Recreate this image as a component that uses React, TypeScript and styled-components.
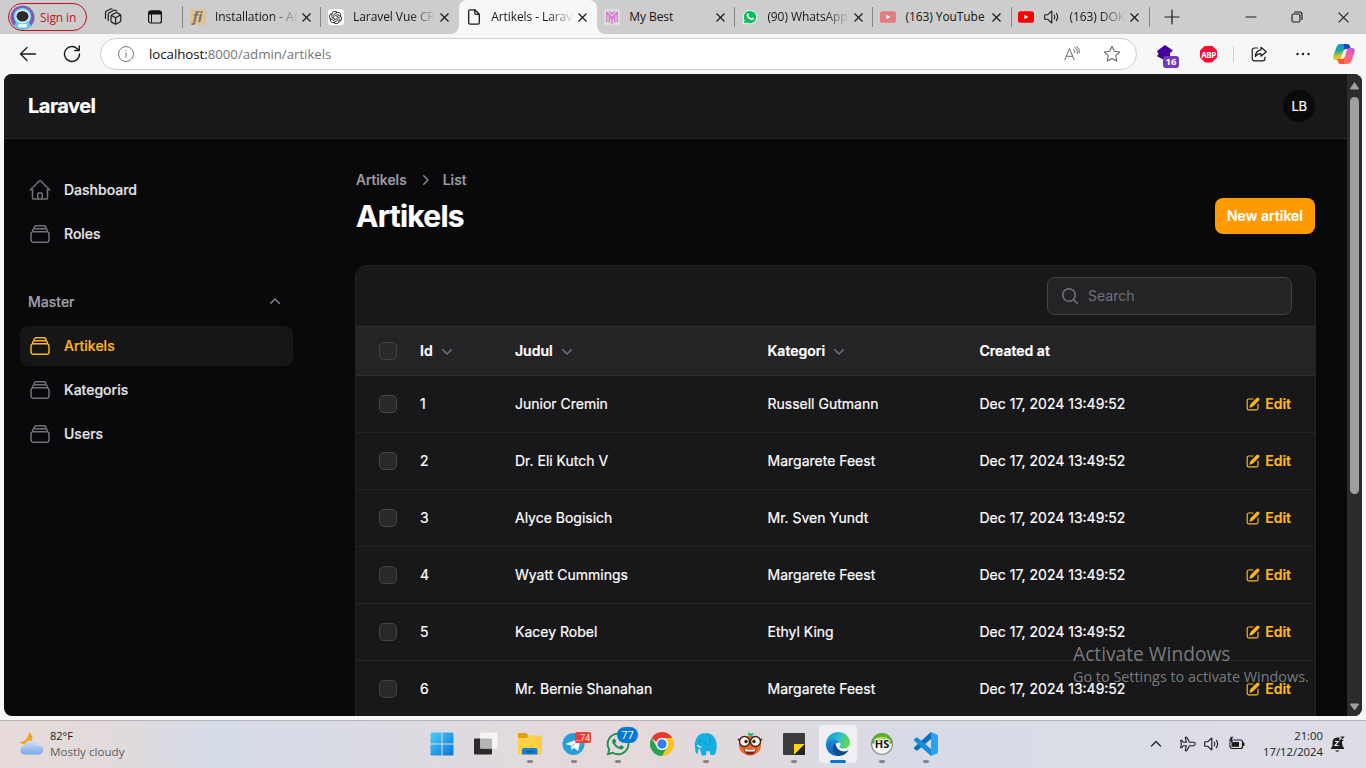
import React from "react";
import styled, { createGlobalStyle, css } from "styled-components";
import { SiOpenai } from "react-icons/si";
import { FaWhatsapp } from "react-icons/fa";

const GlobalStyle = createGlobalStyle`
  *, *::before, *::after { box-sizing: border-box; }
  body { margin: 0; overflow: hidden; background: #f7f7f7; }
  svg { display: block; flex: none; }
`;

const uiFont = `"Open Sans", "Noto Sans", sans-serif`;
const appFont = `Inter, "Liberation Sans", sans-serif`;

const Desktop = styled.div`
  position: relative;
  width: 1366px;
  height: 768px;
  display: flex;
  flex-direction: column;
  overflow: hidden;
  background: #f7f7f7;
  font-family: ${uiFont};
  color: #1b1b1b;
`;

/* ---------- Browser tab strip ---------- */

const TabStrip = styled.div`
  height: 34px;
  flex: none;
  display: flex;
  align-items: center;
  background: #cdcdcd;
`;

const SignIn = styled.div`
  margin-left: 8px;
  width: 79px;
  height: 28px;
  display: flex;
  align-items: center;
  gap: 5px;
  padding-left: 1px;
  border: 1px solid #c50f1f;
  border-radius: 14px;
  color: #c01020;
  font-size: 12px;
  letter-spacing: -0.1px;
  white-space: nowrap;
`;

const StripIcon = styled.div<{ $w: number }>`
  width: ${(p) => p.$w}px;
  display: flex;
  justify-content: center;
  flex: none;
`;

const Tabs = styled.div`
  display: flex;
  height: 34px;
  border-left: 1px solid #858585;
  border-image: linear-gradient(#cdcdcd 7px, #858585 7px, #858585 27px, #cdcdcd 27px) 1;
`;

const Tab = styled.div<{ $active?: boolean; $line?: boolean }>`
  position: relative;
  width: 138.1px;
  height: 34px;
  display: flex;
  align-items: center;
  padding: 0 10.5px 0 6.5px;
  border-radius: 8px 8px 0 0;
  ${(p) =>
    p.$active &&
    css`
      background: #f7f7f7;
      &::before,
      &::after {
        content: "";
        position: absolute;
        bottom: 0;
        width: 8px;
        height: 8px;
      }
      &::before {
        left: -8px;
        background: radial-gradient(circle at 0 0, #cdcdcd 7.5px, #f7f7f7 8px);
      }
      &::after {
        right: -8px;
        background: radial-gradient(circle at 100% 0, #cdcdcd 7.5px, #f7f7f7 8px);
      }
    `}
  ${(p) =>
    p.$line &&
    css`
      &::after {
        content: "";
        position: absolute;
        right: 0;
        top: 7px;
        width: 1px;
        height: 20px;
        background: #858585;
      }
    `}
`;

const TabTitle = styled.div<{ $fade?: boolean; $ls?: number }>`
  flex: 1;
  min-width: 0;
  margin: 0 4px 0 9.5px;
  overflow: hidden;
  white-space: nowrap;
  font-size: 12px;
  letter-spacing: -0.08px;
  line-height: 18px;
  color: #161616;
  ${(p) =>
    p.$fade &&
    css`
      mask-image: linear-gradient(90deg, #000 calc(100% - 26px), transparent);
    `}
`;

const FiIcon = styled.div`
  width: 16px;
  height: 16px;
  flex: none;
  background: #e3c196;
  border-radius: 2px;
  color: #7d746b;
  font: italic 700 14px/15px "Open Sans", sans-serif;
  text-align: center;
`;

const WhiteTile = styled.div`
  width: 16px;
  height: 16px;
  display: grid;
  place-items: center;
  flex: none;
  background: #fff;
  border-radius: 3px;
  color: #222;
`;

const WindowButtons = styled.div`
  margin-left: auto;
  display: flex;
  align-items: center;
`;

/* ---------- Browser toolbar ---------- */

const Toolbar = styled.div`
  height: 40px;
  flex: none;
  display: flex;
  align-items: center;
`;

const NavIcons = styled.div`
  width: 100px;
  display: flex;
  align-items: center;
  gap: 26px;
  padding-left: 19px;
`;

const AddressBar = styled.div`
  width: 1037px;
  height: 32px;
  display: flex;
  align-items: center;
  padding: 0 15px 0 17px;
  border: 1px solid #cfcfcf;
  border-radius: 16px;
  background: #fff;
`;

const Url = styled.div`
  flex: 1;
  margin-left: 15px;
  font-size: 13.3px;
  line-height: 18px;
  letter-spacing: -0.05px;
  color: #767676;
  b {
    font-weight: 400;
    color: #111;
  }
`;

const AddressIcons = styled.div`
  display: flex;
  align-items: center;
  gap: 23px;
`;

const ToolbarIcons = styled.div`
  flex: 1;
  display: flex;
  align-items: center;
`;

const Extension = styled.div`
  position: relative;
  margin-left: 19px;
  width: 20px;
  height: 18px;
`;

const ExtensionBadge = styled.span`
  position: absolute;
  left: 7px;
  top: 11px;
  width: 16px;
  height: 12px;
  border-radius: 3px;
  background: #7338bd;
  color: #fff;
  font-size: 9.5px;
  font-weight: 700;
  line-height: 12px;
  text-align: center;
`;

const AdBlock = styled.div`
  width: 17px;
  height: 17px;
  margin-left: 24px;
  margin-right: 1px;
  background: #fb0a35;
  clip-path: polygon(30% 0, 70% 0, 100% 30%, 100% 70%, 70% 100%, 30% 100%, 0 70%, 0 30%);
  color: #fff;
  font: 700 8px/17px "Open Sans", sans-serif;
  letter-spacing: -0.4px;
  text-align: center;
`;

const Divider = styled.div`
  width: 1px;
  height: 16px;
  margin-left: 15px;
  background: #cfcfcf;
`;

/* ---------- Web page ---------- */

const Viewport = styled.div`
  margin: 0 4px 4px;
  height: 642px;
  flex: none;
  display: flex;
  overflow: hidden;
  border-radius: 8px;
  background: #09090b;
  font-family: ${appFont};
  font-size: 14px;
  line-height: 20px;
  -webkit-text-stroke: 0.2px;
`;

const Page = styled.div`
  flex: 1;
  min-width: 0;
  display: flex;
  flex-direction: column;
`;

const Topbar = styled.header`
  height: 65px;
  flex: none;
  display: flex;
  align-items: center;
  justify-content: space-between;
  padding: 0 32px 1px 24px;
  background: #18181b;
  border-bottom: 1px solid #232326;
`;

const Brand = styled.div`
  font-size: 20px;
  font-weight: 700;
  line-height: 20px;
  letter-spacing: -0.5px;
  color: #fff;
`;

const Avatar = styled.div`
  width: 32px;
  height: 32px;
  border-radius: 50%;
  background: #09090b;
  color: #fff;
  font-size: 13px;
  line-height: 32px;
  letter-spacing: -0.5px;
  text-align: center;
`;

const Columns = styled.div`
  flex: 1;
  min-height: 0;
  display: flex;
`;

const Sidebar = styled.nav`
  width: 320px;
  flex: none;
  display: flex;
  flex-direction: column;
  gap: 28px;
  padding: 31px 31px 0 16px;
`;

const NavGroup = styled.div`
  display: flex;
  flex-direction: column;
  gap: 4px;
`;

const GroupLabel = styled.div`
  height: 40px;
  display: flex;
  align-items: center;
  justify-content: space-between;
  padding: 0 8px;
  font-weight: 500;
  color: #a1a1aa;
  svg {
    color: #84848c;
  }
`;

const NavItem = styled.a<{ $active?: boolean }>`
  height: 40px;
  display: flex;
  align-items: center;
  gap: 12px;
  padding: 0 8px;
  border-radius: 8px;
  font-weight: 500;
  color: ${(p) => (p.$active ? "#fbb51e" : "#e4e4e7")};
  background: ${(p) => (p.$active ? "#161617" : "transparent")};
  svg {
    color: ${(p) => (p.$active ? "#fbb51e" : "#71717a")};
  }
`;

const Main = styled.main`
  width: 960px;
  display: flex;
  flex-direction: column;
  padding-top: 31px;
  margin-left: 31px;
`;

const Crumbs = styled.div`
  display: flex;
  align-items: center;
  gap: 8px;
  padding-left: 1px;
  font-weight: 500;
  color: #a1a1aa;
  svg {
    color: #84848c;
  }
`;

const HeadingRow = styled.div`
  height: 36px;
  margin-top: 8px;
  display: flex;
  align-items: center;
  justify-content: space-between;
  padding-left: 1px;
`;

const Heading = styled.h1`
  margin: 0;
  font-size: 30px;
  font-weight: 700;
  line-height: 36px;
  letter-spacing: -0.75px;
  color: #fff;
`;

const PrimaryButton = styled.button`
  width: 100px;
  height: 36px;
  padding: 0;
  border: 0;
  border-radius: 8px;
  background: #ff9a00;
  color: #fff;
  font: 600 14px/20px ${appFont};
`;

const TableCard = styled.section`
  width: 961px;
  height: 480px;
  flex: none;
  margin-top: 31px;
  border: 1px solid #222225;
  border-radius: 12px 12px 0 0;
  background: #18181b;
  overflow: hidden;
`;

const TableTools = styled.div`
  height: 60px;
  display: flex;
  justify-content: flex-end;
  padding: 11px 23px 0 0;
`;

const SearchField = styled.div`
  width: 245px;
  height: 38px;
  display: flex;
  align-items: center;
  gap: 8px;
  padding-left: 12px;
  border: 1px solid #454548;
  border-radius: 8px;
  background: #242427;
  color: #71717a;
  -webkit-text-stroke: 0;
`;

const Row = styled.div<{ $head?: boolean }>`
  height: ${(p) => (p.$head ? 50 : 57)}px;
  display: grid;
  grid-template-columns: 52px 95px 252.5px 212px 1fr;
  align-items: center;
  border-bottom: 1px solid ${(p) => (p.$head ? "#303032" : "#242427")};
  border-top: ${(p) => (p.$head ? "1px solid #303032" : "0")};
  background: ${(p) => (p.$head ? "#242427" : "transparent")};
  font-weight: ${(p) => (p.$head ? 600 : 400)};
  color: #fff;
`;

const Cell = styled.div<{ $end?: boolean }>`
  display: flex;
  align-items: center;
  justify-content: ${(p) => (p.$end ? "flex-end" : "flex-start")};
  gap: 4px;
  padding: 0 ${(p) => (p.$end ? 24 : 12)}px 0 12px;
  white-space: nowrap;
`;

const SortIcon = styled.span`
  color: #71717a;
`;

const LastCells = styled.div`
  display: flex;
  justify-content: space-between;
`;

const Checkbox = styled.span`
  width: 18px;
  height: 18px;
  margin-left: 23px;
  border: 1px solid #454548;
  border-radius: 5px;
  background: #29292b;
`;

const EditLink = styled.a`
  display: flex;
  align-items: center;
  gap: 4px;
  font-weight: 600;
  color: #fbb51e;
`;

const Scrollbar = styled.div`
  width: 15px;
  flex: none;
  display: flex;
  flex-direction: column;
  align-items: center;
  padding: 8px 0 5px;
  background: #2c2c2c;
`;

const Thumb = styled.div`
  width: 9px;
  height: 397px;
  margin-top: 7px;
  border-radius: 5px;
  background: #9f9f9f;
`;

const Spacer = styled.div`
  flex: 1;
`;

const Watermark = styled.div`
  position: absolute;
  left: 1073px;
  top: 641px;
  color: rgba(150, 150, 150, 0.8);
  white-space: nowrap;
`;

const WatermarkTitle = styled.div`
  font-size: 19.2px;
  line-height: 26px;
`;

const WatermarkText = styled.div`
  font-size: 14.4px;
  line-height: 20px;
`;

/* ---------- Taskbar ---------- */

const Taskbar = styled.footer`
  height: 48px;
  flex: none;
  display: flex;
  align-items: center;
  padding-bottom: 1px;
  border-top: 1px solid #b4b4b8;
  background: linear-gradient(90deg, #e6dbda 0, #e2dadb 110px, #d5dce9 220px, #dbdbe3 370px, #e5d9da 620px, #dfd9de 760px, #d8dbe6 900px, #dddde6 1366px);
`;

const Weather = styled.div`
  width: 420px;
  flex: none;
  display: flex;
  align-items: center;
  gap: 6px;
  padding-left: 18px;
  padding-bottom: 1px;
  font-size: 11.65px;
  line-height: 16px;
  color: #5c5c5c;
  b {
    display: block;
    font-weight: 400;
    color: #1b1b1b;
    font-size: 11px;
  }
`;

const Slot = styled.div`
  width: 44px;
  height: 46px;
  display: flex;
  justify-content: center;
  align-items: center;
`;

const AppTile = styled.div<{ $active?: boolean; $running?: boolean }>`
  position: relative;
  width: 38px;
  height: 38px;
  display: grid;
  place-items: center;
  border-radius: 4px;
  background: ${(p) => (p.$active ? "#f0eff3" : "transparent")};
  ${(p) =>
    (p.$running || p.$active) &&
    css`
      &::after {
        content: "";
        position: absolute;
        left: 50%;
        bottom: 0;
        width: ${p.$active ? 16 : 6}px;
        height: 3px;
        transform: translateX(-50%);
        border-radius: 2px;
        background: ${p.$active ? "#0078d4" : "#858388"};
      }
    `}
`;

const Badge = styled.span<{ $kind: "red" | "blue" }>`
  position: absolute;
  top: ${(p) => (p.$kind === "red" ? 7 : 2)}px;
  left: ${(p) => (p.$kind === "red" ? 20 : 18)}px;
  width: ${(p) => (p.$kind === "red" ? 16 : 21)}px;
  height: ${(p) => (p.$kind === "red" ? 11 : 16)}px;
  border-radius: ${(p) => (p.$kind === "red" ? 2 : 8)}px;
  background: ${(p) => (p.$kind === "red" ? "#f23c34" : "#0078d4")};
  color: #fff;
  font-size: ${(p) => (p.$kind === "red" ? 8.5 : 11)}px;
  line-height: ${(p) => (p.$kind === "red" ? 11 : 16)}px;
  text-align: center;
`;

const Tray = styled.div`
  margin-left: auto;
  display: flex;
  align-items: center;
  padding-right: 20px;
`;

const TrayIcons = styled.div`
  display: flex;
  align-items: center;
  gap: 8px;
  margin-left: 18px;
`;

const Clock = styled.div`
  width: 78px;
  margin-right: 7px;
  padding-bottom: 1px;
  text-align: right;
  font-size: 11.3px;
  line-height: 16px;
  color: #1b1b1b;
`;

/* ---------- Icons ---------- */

type LineProps = {
  size?: number;
  w?: number;
  box?: number;
  d: string;
  color?: string;
};

const Line = ({ size = 16, w = 1, box = 16, d, color = "currentColor" }: LineProps) => (
  <svg width={size} height={size} viewBox={`0 0 ${box} ${box}`} fill="none" stroke={color} strokeWidth={w} strokeLinecap="round" strokeLinejoin="round">
    <path d={d} />
  </svg>
);

const Solid = ({ size = 20, paths, rule }: { size?: number; paths: string[]; rule?: "evenodd" }) => (
  <svg width={size} height={size} viewBox="0 0 20 20" fill="currentColor">
    {paths.map((d) => (
      <path key={d} d={d} fillRule={rule} clipRule={rule} />
    ))}
  </svg>
);

const HOME =
  "m2.25 12 8.954-8.955c.44-.439 1.152-.439 1.591 0L21.75 12M4.5 9.75v10.125c0 .621.504 1.125 1.125 1.125H9.75v-4.875c0-.621.504-1.125 1.125-1.125h2.25c.621 0 1.125.504 1.125 1.125V21h4.125c.621 0 1.125-.504 1.125-1.125V9.75M8.25 21h8.25";
const STACK =
  "M6 6.878V6a2.25 2.25 0 0 1 2.25-2.25h7.5A2.25 2.25 0 0 1 18 6v.878m-12 0c.235-.083.487-.128.75-.128h10.5c.263 0 .515.045.75.128m-12 0A2.25 2.25 0 0 0 4.5 9v.878m13.5-3A2.25 2.25 0 0 1 19.5 9v.878m0 0a2.246 2.246 0 0 0-.75-.128H5.25c-.263 0-.515.045-.75.128m15 0A2.25 2.25 0 0 1 21 12v6a2.25 2.25 0 0 1-2.25 2.25H5.25A2.25 2.25 0 0 1 3 18v-6c0-.98.626-1.813 1.5-2.122";
const CHEVRON_DOWN =
  "M5.22 8.22a.75.75 0 0 1 1.06 0L10 11.94l3.72-3.72a.75.75 0 1 1 1.06 1.06l-4.25 4.25a.75.75 0 0 1-1.06 0L5.22 9.28a.75.75 0 0 1 0-1.06Z";
const CHEVRON_UP =
  "M9.47 6.47a.75.75 0 0 1 1.06 0l4.25 4.25a.75.75 0 1 1-1.06 1.06L10 8.06l-3.72 3.72a.75.75 0 0 1-1.06-1.06l4.25-4.25Z";
const CHEVRON_RIGHT =
  "M8.22 5.22a.75.75 0 0 1 1.06 0l4.25 4.25a.75.75 0 0 1 0 1.06l-4.25 4.25a.75.75 0 0 1-1.06-1.06L11.94 10 8.22 6.28a.75.75 0 0 1 0-1.06Z";
const MAGNIFIER = "M9 3.5a5.5 5.5 0 1 0 0 11 5.5 5.5 0 0 0 0-11ZM2 9a7 7 0 1 1 12.452 4.391l3.328 3.329a.75.75 0 1 1-1.06 1.06l-3.329-3.328A7 7 0 0 1 2 9Z";
const PENCIL = [
  "m5.433 13.917 1.262-3.155A4 4 0 0 1 7.58 9.42l6.92-6.918a2.121 2.121 0 0 1 3 3l-6.92 6.918c-.383.383-.84.685-1.343.886l-3.154 1.262a.5.5 0 0 1-.65-.65Z",
  "M3.5 5.75c0-.69.56-1.25 1.25-1.25H10A.75.75 0 0 0 10 3H4.75A2.75 2.75 0 0 0 2 5.75v9.5A2.75 2.75 0 0 0 4.75 18h9.5A2.75 2.75 0 0 0 17 15.25V10a.75.75 0 0 0-1.5 0v5.25c0 .69-.56 1.25-1.25 1.25h-9.5c-.69 0-1.25-.56-1.25-1.25v-9.5Z",
];

const AstronautIcon = () => (
  <svg width="25" height="25" viewBox="0 0 25 25">
    <circle cx="12.5" cy="12.5" r="12" fill="#8059b5" />
    <path d="M4 21c1-4 4-5 8.500-5s7.500 1 8.500 5a12 12 0 0 1-17 0z" fill="#5ccbe4" />
    <circle cx="12.500" cy="11.500" r="8.800" fill="#72d3ec" />
    <ellipse cx="12.500" cy="11.300" rx="7.300" ry="6.800" fill="#eaf4fa" />
    <ellipse cx="12.500" cy="11.300" rx="6" ry="5.200" fill="#2c2a2b" />
    <rect x="8" y="19" width="9" height="3.500" rx="1" fill="#e8f3f8" />
  </svg>
);

const WorkspacesIcon = () => (
  <Line
    size={18}
    box={18}
    w={1.2}
    color="#1b1b1b"
    d="M7 8.200q0-.800.700-1.200l4-2.200q.700-.400 1.400 0l3 1.600q.700.400.700 1.200v5q0 .800-.700 1.200l-3.700 2.100q-.700.400-1.400 0l-3.300-1.800q-.700-.400-.700-1.200zM7.300 7.500l4.300 2.300 4.900-2.800M11.600 9.800v6M4.200 12.500V6.300q0-.800.700-1.200L10 2.300q.700-.300 1.400 0l1.300.700M1.500 10.500V4.500q0-.800.700-1.200L6.500 1q.700-.300 1.500 0"
  />
);

const TabMenuIcon = () => (
  <svg width="16" height="16" viewBox="0 0 16 16">
    <rect x="1.600" y="2" width="12.800" height="12" rx="2" fill="none" stroke="#111" strokeWidth="1.200" />
    <path d="M1.500 3.500q0-2 2-2h9q2 0 2 2V5.500h-13z" fill="#111" />
    <path d="M4.500 5v8.500" stroke="#111" strokeWidth="1" />
  </svg>
);

const CloseIcon = ({ size = 8 }: { size?: number }) => (
  <svg width={size + 1} height={size + 1} viewBox="0 0 9 9" stroke="#1b1b1b" strokeWidth={size > 8 ? 0.9 : 1.2}>
    <path d="M.5.5l8 8M8.500.500l-8 8" />
  </svg>
);

const PageIcon = () => <Line w={1.3} color="#1b1b1b" d="M2.700 2.200Q2.700.800 4 .800h4.800l4.500 4.500v8.500q0 1.400-1.400 1.400H4q-1.300 0-1.300-1.400zM8.800.900v3.200q0 1.200 1.200 1.200h3.200" />;

const MyBestIcon = () => (
  <svg width="16" height="16" viewBox="0 0 16 16">
    <rect width="16" height="16" fill="#dcdcdc" />
    <path d="M2.800 13V3.500L8 8.500l5.200-5V13M5.300 13.500V7.500L8 10l2.700-2.500v6M8 10v5M5.300 2.500 8 5l2.700-2.500" fill="none" stroke="#d77bd5" strokeWidth="1.400" />
  </svg>
);

const WhatsTabIcon = () => (
  <svg width="16" height="16" viewBox="0 0 16 16">
    <path d="M1 15l1.200-3.500A6.700 6.700 0 1 1 4.800 14z" fill="#0cc058" stroke="#fff" strokeWidth=".9" />
    <path d="M5.600 4.400c.5-.3.900 0 1.100.6.300.8.200 1-.3 1.600.7 1.400 1.500 2.100 2.900 2.700.6-.7.800-1 1.300-.7 1.200.5 1.400.6 1.200 1.200-.5 1.300-1.900 1.500-3.300.9C6.400 9.900 5.200 8.500 4.800 7c-.3-1.200 0-2 .8-2.600z" fill="#fff" />
  </svg>
);

const YouTubeIcon = ({ color }: { color: string }) => (
  <svg width="16" height="16" viewBox="0 0 16 16">
    <rect x="0" y="2.300" width="16" height="11.500" rx="2.600" fill={color} />
    <path d="M6.400 5.800v4.500l4-2.200z" fill="#fff" />
  </svg>
);

const SpeakerIcon = ({ size = 16 }: { size?: number }) => (
  <Line size={size} w={1.1} color="#1b1b1b" d="M1.200 5.800h2.300L7.800 2v12L3.500 10.200H1.200Q.6 10.200.6 9.500v-3q0-.7.6-.7zM10.200 6q1.200 2 0 4M12.400 4.300q2.400 3.700 0 7.400" />
);

const CopilotIcon = () => (
  <svg width="24" height="24" viewBox="0 0 24 24">
    <defs>
      <linearGradient id="cpA" x1="0" y1="0" x2=".2" y2="1">
        <stop offset="0" stopColor="#1684e0" />
        <stop offset=".5" stopColor="#1fae9c" />
        <stop offset=".8" stopColor="#e5c424" />
      </linearGradient>
      <linearGradient id="cpB" x1="1" y1="0" x2=".2" y2="1">
        <stop offset="0" stopColor="#ad58ee" />
        <stop offset=".5" stopColor="#fa619b" />
        <stop offset="1" stopColor="#ff7c34" />
      </linearGradient>
    </defs>
    <path d="M15.500 2H8.200Q5.500 2 4.600 4.800L1.400 14q-1 3.600 2.300 4h3.100q1.700 0 2.300-2L13 4q.6-2 2.500-2z" fill="url(#cpA)" />
    <path d="M12 2h3.300q2 0 2.700 2.200L18.800 7h-5q-1.600 0-2.200 2z" fill="#164ac4" />
    <path d="M8.500 22h7.300q2.700 0 3.600-2.800L22.600 10q1-3.600-2.300-4h-3.100q-1.700 0-2.300 2L11 20q-.6 2-2.500 2z" fill="url(#cpB)" />
    <path d="M12 22H8.700q-2 0-2.700-2.200L5.200 17h5q1.600 0 2.200-2z" fill="#ff5630" />
  </svg>
);

const WeatherIcon = () => (
  <svg width="26" height="26" viewBox="0 0 26 26">
    <defs>
      <linearGradient id="cloud" x1="0" y1="0" x2="0" y2="1">
        <stop offset="0" stopColor="#cfe2fb" />
        <stop offset="1" stopColor="#7da6e9" />
      </linearGradient>
    </defs>
    <path d="M11 1c2.500 1.500 4 5 3.200 8.200C12.800 14 7 15.500 1 10.800 6 11.500 10.500 7.500 11 1z" fill="#f3a51f" />
    <path d="M5.500 23.500a4.500 4.500 0 0 1 .8-8.700A6.800 6.800 0 0 1 19.500 14.500a4.600 4.600 0 1 1 1 9z" fill="url(#cloud)" />
  </svg>
);

const WindowsIcon = () => (
  <svg width="24" height="24" viewBox="0 0 24 24">
    <defs>
      <linearGradient id="win" gradientUnits="userSpaceOnUse" x1="0" y1="0" x2="24" y2="24">
        <stop offset="0" stopColor="#4cd0fb" />
        <stop offset="1" stopColor="#0873d2" />
      </linearGradient>
    </defs>
    <path d="M.5 1.500q0-1 1-1H11.500v11H.5zM12.500.5h10q1 0 1 1v10h-11zM.5 12.500h11v11h-10q-1 0-1-1zM12.500 12.500h11v10q0 1-1 1h-10z" fill="url(#win)" />
  </svg>
);

const TaskViewIcon = () => (
  <svg width="24" height="24" viewBox="0 0 24 24">
    <rect x="0" y="6.500" width="18" height="16" rx="1" fill="#2c2b2b" />
    <rect x="6" y=".5" width="17.500" height="16" rx="1" fill="#f5f5f6" />
    <path d="M6 6.500h11q1 0 1 1v9H7q-1 0-1-1z" fill="#b4b4b4" />
  </svg>
);

const ExplorerIcon = () => (
  <svg width="26" height="24" viewBox="0 0 26 24">
    <path d="M1 2q0-1 1-1h7l2.500 2.500V8H1z" fill="#dda00c" />
    <path d="M1 6h8.500L12 3.500h12q1 0 1 1V21q0 1.500-1.500 1.500h-21Q1 22.500 1 21z" fill="#ffd045" />
    <path d="M5 22.500V18q0-2 2-2h11.500q2 0 2 2v4.500z" fill="#147dce" />
    <path d="M9 20.500q0-1.200 1-1.200h6q1 0 1 1.200z" fill="#0b569f" />
  </svg>
);

const TelegramIcon = () => (
  <svg width="24" height="24" viewBox="0 0 24 24">
    <circle cx="11.500" cy="12" r="11" fill="#279ed5" />
    <path d="M4 11.800 18 6.300q.9-.2.700.8l-2.300 11q-.2.900-1 .4l-3.600-2.700-1.900 1.900q-.5.300-.6-.4l-.5-3.700-4.600-1.300q-.8-.2-.2-.5z" fill="#fff" />
    <path d="m9 13.500 6.500-4-4.500 5-1.200 3z" fill="#b9d8ea" />
  </svg>
);

const ChromeIcon = () => (
  <svg width="24" height="24" viewBox="0 0 24 24">
    <path d="M1.600 6A12 12 0 0 1 22.400 6H12a6 6 0 0 0-5.600 4z" fill="#e33b2e" />
    <path d="M22.400 6A12 12 0 0 1 12 24l5.200-9A6 6 0 0 0 12 6z" fill="#fcc31e" />
    <path d="M1.600 6A12 12 0 0 0 12 24l5.200-9A6 6 0 0 1 6.800 15z" fill="#2ba24c" />
    <circle cx="12" cy="12" r="6" fill="#fff" />
    <circle cx="12" cy="12" r="4.700" fill="#3b7ded" />
  </svg>
);

const ElephantIcon = () => (
  <svg width="24" height="24" viewBox="0 0 24 24">
    <path d="M4.500 3.500C6.500 1.500 9 1 11 1.500c3-.8 6.500 0 8.500 3 2.500 2.500 3.500 6 3.200 9.500 0 3.500-.7 6-1.700 8.500q-2.500 1-4.800 0l-.7-3.500q-1.500.5-3 0l-.3 4q-2.500 1-4.700 0L5.800 16.500q-1.500-.3-1.600 2 .1 2-.7 3.500Q1 21 1.200 17c-.8-4-.7-9.500 3.300-13.500z" fill="#16afe2" />
    <path d="M13 2c4 2 5 7 2.500 10.500-2.800 1-5-.5-6-3.500" fill="none" stroke="#0b8fc4" strokeWidth=".8" />
    <circle cx="5.800" cy="9" r=".8" fill="#07588b" />
    <path d="M3.500 13q1 2.500 4 2" stroke="#fff" strokeWidth="1.200" fill="none" />
  </svg>
);

const OrangeFaceIcon = () => (
  <svg width="26" height="26" viewBox="0 0 26 26">
    <ellipse cx="13" cy="14.500" rx="11" ry="10" fill="#ed6826" />
    <path d="M11 4V1.500l3 1 3-.5-2 3.500z" fill="#24b36a" />
    <circle cx="7.500" cy="10.500" r="5" fill="#fff4de" stroke="#3c2522" strokeWidth="1.400" />
    <circle cx="18.500" cy="10.500" r="5" fill="#fff4de" stroke="#3c2522" strokeWidth="1.400" />
    <path d="M.7 8.500h2M23.300 8.500h2" stroke="#3c2522" strokeWidth="1.500" />
    <circle cx="9" cy="10.500" r="1.700" fill="#31201e" />
    <circle cx="17" cy="10.500" r="1.700" fill="#31201e" />
    <path d="M6.500 17.500q6.500 2 13 0-1 6-6.500 6t-6.500-6z" fill="#7c1c25" />
    <path d="M7.500 18q5.500 1.500 11 0l-1 2.500h-9z" fill="#fff" />
  </svg>
);

const NotesIcon = () => (
  <svg width="24" height="24" viewBox="0 0 24 24">
    <rect x="1" y="1" width="22" height="22" rx="1" fill="#3b3b3c" />
    <path d="M12 12h11L12 23z" fill="#fcd414" />
    <path d="M23 12v10q0 1-1 1H12z" fill="#252525" />
  </svg>
);

const EdgeIcon = () => (
  <svg width="26" height="26" viewBox="0 0 26 26">
    <defs>
      <linearGradient id="edA" x1="0" y1=".3" x2="1" y2=".5">
        <stop offset="0" stopColor="#1897d4" />
        <stop offset=".5" stopColor="#29bfc7" />
        <stop offset="1" stopColor="#67dc50" />
      </linearGradient>
      <linearGradient id="edB" x1="0" y1="0" x2="0" y2="1">
        <stop offset="0" stopColor="#1b8edb" />
        <stop offset="1" stopColor="#1262bb" />
      </linearGradient>
    </defs>
    <path d="M1 12C2 5 7 1 13 1c7 0 12 5 12 10.500 0 4-3 6-6.500 6-2.500 0-4.500-1-4-2 1.300-1.300 1.200-2.700.700-4C13.500 7.500 6 6.500 1 12z" fill="url(#edA)" />
    <path d="M1 12c3-5 12-5.500 14 0-5-1.500-7 3-5.500 6.500 1 2.500 3 5 5.500 6.300C7 26.500 0 20 1 12z" fill="url(#edB)" />
    <path d="M10.500 11.800c-3 2.200-3 6.700-.3 9.500 3.500 3.600 8.800 3 13.300-2-2.500 1.500-6.500 1.700-9.300-.3-2.500-1.800-3.700-4.500-3.700-7.200z" fill="#114b8b" />
    <path d="M23.500 19.300c-2 3.500-5.500 5.700-9.500 5.700-4-1-7-5-6.500-9 1.500 5 9 8.500 16 3.300z" fill="#114b8b" />
  </svg>
);

const HeidiIcon = () => (
  <svg width="24" height="24" viewBox="0 0 24 24">
    <circle cx="12" cy="12" r="10.500" fill="#f3f5f0" stroke="#8c918c" strokeWidth="1.200" />
    <path d="M1.800 11.500a10.200 10.200 0 0 1 20.400 0z" fill="#5cae22" />
    <path d="M4 8Q12 1.500 20 8q-8-3-16 0z" fill="#b9e391" />
    <text x="12" y="16" textAnchor="middle" fontFamily="Open Sans" fontWeight="700" fontSize="11" fill="#111" stroke="#fff" strokeWidth="2" paintOrder="stroke">HS</text>
  </svg>
);

const CodeIcon = () => (
  <svg width="26" height="26" viewBox="0 0 26 26">
    <path d="M18 1 24 3.500q1 .5 1 1.500v16q0 1-1 1.500L18 25z" fill="#2ba4f0" />
    <path d="M18 1v7L4.500 19.500q-.6.500-1.200 0L1.200 17.700q-.7-.7 0-1.400z" fill="#0b6fb9" />
    <path d="M18 25v-7L4.500 6.500q-.6-.5-1.200 0L1.200 8.300q-.7.700 0 1.400z" fill="#178bd7" />
  </svg>
);

const BatteryIcon = () => (
  <svg width="17" height="16" viewBox="0 0 17 16">
    <rect x="2" y="4" width="12.500" height="8.500" rx="2" fill="none" stroke="#1b1b1b" strokeWidth="1.200" />
    <rect x="3.500" y="6" width="7.500" height="4.800" fill="#1b1b1b" />
    <path d="M15.700 6.500V10" stroke="#1b1b1b" strokeWidth="1.500" />
    <path d="M2.800.500.700 5h2l-.6 4L6 4H4L5.500.500z" fill="#1b1b1b" stroke="#dddde6" strokeWidth=".5" />
  </svg>
);

const BellIcon = () => (
  <svg width="16" height="18" viewBox="0 0 16 18">
    <path d="M2.500 7q.3-4 4.500-4.500h5V8l.8 3.500L14 13v1H1v-1l1.500-2z" fill="#1b1b1b" />
    <path d="M5 15.500h4.500Q7.300 18 5 15.500z" fill="#1b1b1b" />
    <path d="M5 6.500h3.300L5 10.500h3.500" fill="none" stroke="#fff" strokeWidth="1.100" />
    <path d="M9.500 1h5v5h-5z" fill="#dddde6" />
    <path d="M10.500 2h3l-3 3.500h3" fill="none" stroke="#1b1b1b" strokeWidth="1.100" />
  </svg>
);

/* ---------- Data ---------- */

const tabs = [
  { title: "Installation - Admin", icon: <FiIcon>fi</FiIcon>, fade: true, line: true },
  { title: "Laravel Vue CRUD", icon: <WhiteTile><SiOpenai size={13} /></WhiteTile>, fade: true },
  { title: "Artikels - Laravel", icon: <PageIcon />, fade: true, active: true },
  { title: "My Best", icon: <MyBestIcon />, line: true },
  { title: "(90) WhatsApp", icon: <WhatsTabIcon />, fade: true, line: true },
  { title: "(163) YouTube", icon: <YouTubeIcon color="#e57c80" />, line: true },
  { title: "(163) DOKU", icon: <YouTubeIcon color="#ff0000" />, fade: true, line: true, audio: true },
];

const articles = [
  [1, "Junior Cremin", "Russell Gutmann"],
  [2, "Dr. Eli Kutch V", "Margarete Feest"],
  [3, "Alyce Bogisich", "Mr. Sven Yundt"],
  [4, "Wyatt Cummings", "Margarete Feest"],
  [5, "Kacey Robel", "Ethyl King"],
  [6, "Mr. Bernie Shanahan", "Margarete Feest"],
] as const;

const apps: { icon: React.ReactNode; running?: boolean; active?: boolean }[] = [
  { icon: <WindowsIcon /> },
  { icon: <TaskViewIcon /> },
  { icon: <ExplorerIcon />, running: true },
  { icon: <><TelegramIcon /><Badge $kind="red">..74</Badge></>, running: true },
  { icon: <><FaWhatsapp size={26} color="#1d8f57" /><Badge $kind="blue">77</Badge></>, running: true },
  { icon: <ChromeIcon /> },
  { icon: <ElephantIcon />, running: true },
  { icon: <OrangeFaceIcon /> },
  { icon: <NotesIcon />, running: true },
  { icon: <EdgeIcon />, active: true },
  { icon: <HeidiIcon />, running: true },
  { icon: <CodeIcon />, running: true },
];

const NavLink = ({ label, icon = STACK, active }: { label: string; icon?: string; active?: boolean }) => (
  <NavItem $active={active}>
    <Line size={24} box={24} w={1.5} d={icon} />
    {label}
  </NavItem>
);

const SortHead = ({ label }: { label: string }) => (
  <Cell>
    {label}
    <SortIcon>
      <Solid paths={[CHEVRON_DOWN]} />
    </SortIcon>
  </Cell>
);

const AudioMark = styled.span`
  margin-left: 10px;
`;

export default function App() {
  return (
    <Desktop>
      <GlobalStyle />
      <TabStrip>
        <SignIn>
          <AstronautIcon />
          Sign in
        </SignIn>
        <StripIcon $w={52}><WorkspacesIcon /></StripIcon>
        <StripIcon $w={32}><TabMenuIcon /></StripIcon>
        <StripIcon $w={11} />
        <Tabs>
          {tabs.map((t) => (
            <Tab key={t.title} $active={t.active} $line={t.line}>
              {t.icon}
              {t.audio && <AudioMark><SpeakerIcon /></AudioMark>}
              <TabTitle $fade={t.fade}>{t.title}</TabTitle>
              <CloseIcon />
            </Tab>
          ))}
        </Tabs>
        <StripIcon $w={44}><Line w={1.2} color="#1b1b1b" d="M8 1v14M1 8h14" /></StripIcon>
        <WindowButtons>
          <StripIcon $w={46}><Line size={12} box={12} w={1.1} color="#1b1b1b" d="M1 6h10" /></StripIcon>
          <StripIcon $w={46}>
            <Line size={12} box={12} w={1.1} color="#1b1b1b" d="M1 4.500q0-1.500 1.500-1.500h5Q9 3 9 4.500v5Q9 11 7.500 11h-5Q1 11 1 9.500zM3.500 1h5Q11 1 11 3.500v5" />
          </StripIcon>
          <StripIcon $w={46}><CloseIcon size={10} /></StripIcon>
        </WindowButtons>
      </TabStrip>

      <Toolbar>
        <NavIcons>
          <Line size={18} box={18} w={1.3} color="#1b1b1b" d="M1.500 9h15M8 2.500 1.500 9 8 15.500" />
          <Line size={18} box={18} w={1.4} color="#1b1b1b" d="M16.500 9a7.500 7.500 0 1 1-2.500-5.600L16.300 5.500M16.300 1v4.500h-4.500" />
        </NavIcons>
        <AddressBar>
          <Line size={16} w={1} color="#767676" d="M8 .5a7.500 7.500 0 1 1 0 15 7.500 7.500 0 0 1 0-15zM8 7v4.500M8 4.500v.200" />
          <Url><b>localhost:</b>8000/admin/artikels</Url>
          <AddressIcons>
            <Line w={1} color="#6b6b6b" d="M.8 14 5.500 2.500 10.200 14M2.500 10.300h6M9.500 3.300q1.500 1.300 1.300 3.200M11 1.300q3 2.200 2.500 6M12.800.500q3 2.200 2.700 6" />
            <Line size={18} box={18} w={1.1} color="#6b6b6b" d="m9 1.300 2.300 5 5.400.7-4 3.700 1.100 5.400L9 13.400l-4.800 2.700 1.100-5.400-4-3.700 5.400-.7z" />
          </AddressIcons>
        </AddressBar>
        <ToolbarIcons>
          <Extension>
            <svg width="18" height="16" viewBox="0 0 18 16">
              <path d="M9 0 17 5.500 14 8v4.500L8 15 1 11l1.800-1.500L1 6z" fill="#4b00a2" />
              <path d="m1 11 2.500-2.500L9 11v4z" fill="#32107a" />
            </svg>
            <ExtensionBadge>16</ExtensionBadge>
          </Extension>
          <AdBlock>ABP</AdBlock>
          <Divider />
          <StripIcon $w={49}>
            <Line size={16} w={1.2} color="#1b1b1b" d="M6.500 2H3.500Q1.200 2 1.200 4.300v8Q1.200 14.800 3.500 14.800h8Q14 14.800 14 12.500V11M10 1.300 15.200 5.800 10 10.200V7.700Q6.500 7.500 4.300 10.500 4.800 4.300 10 3.800z" />
          </StripIcon>
          <StripIcon $w={39}>
            <svg width="14" height="4" viewBox="0 0 14 4" fill="#1b1b1b">
              <circle cx="1.500" cy="2" r="1.200" />
              <circle cx="7" cy="2" r="1.200" />
              <circle cx="12.500" cy="2" r="1.200" />
            </svg>
          </StripIcon>
          <StripIcon $w={44}><CopilotIcon /></StripIcon>
        </ToolbarIcons>
      </Toolbar>

      <Viewport>
        <Page>
          <Topbar>
            <Brand>Laravel</Brand>
            <Avatar>LB</Avatar>
          </Topbar>
          <Columns>
            <Sidebar>
              <NavGroup>
                <NavLink label="Dashboard" icon={HOME} />
                <NavLink label="Roles" />
              </NavGroup>
              <NavGroup>
                <GroupLabel>
                  Master
                  <Solid paths={[CHEVRON_UP]} />
                </GroupLabel>
                <NavLink label="Artikels" active />
                <NavLink label="Kategoris" />
                <NavLink label="Users" />
              </NavGroup>
            </Sidebar>
            <Main>
              <Crumbs>
                Artikels
                <Solid paths={[CHEVRON_RIGHT]} />
                List
              </Crumbs>
              <HeadingRow>
                <Heading>Artikels</Heading>
                <PrimaryButton>New artikel</PrimaryButton>
              </HeadingRow>
              <TableCard>
                <TableTools>
                  <SearchField>
                    <Solid paths={[MAGNIFIER]} rule="evenodd" />
                    Search
                  </SearchField>
                </TableTools>
                <Row $head>
                  <Checkbox />
                  <SortHead label="Id" />
                  <SortHead label="Judul" />
                  <SortHead label="Kategori" />
                  <Cell>Created at</Cell>
                </Row>
                {articles.map(([id, title, category]) => (
                  <Row key={id}>
                    <Checkbox />
                    <Cell>{id}</Cell>
                    <Cell>{title}</Cell>
                    <Cell>{category}</Cell>
                    <LastCells>
                      <Cell>Dec 17, 2024 13:49:52</Cell>
                      <Cell $end>
                        <EditLink>
                          <Solid size={16} paths={PENCIL} />
                          Edit
                        </EditLink>
                      </Cell>
                    </LastCells>
                  </Row>
                ))}
              </TableCard>
            </Main>
          </Columns>
        </Page>
        <Scrollbar>
          <svg width="9" height="8" viewBox="0 0 9 8" fill="#9f9f9f"><path d="M4.500 0 9 6.500Q9 7.500 8 7.500H1Q0 7.500 0 6.500z" /></svg>
          <Thumb />
          <Spacer />
          <svg width="9" height="8" viewBox="0 0 9 8" fill="#9f9f9f"><path d="M4.500 7.500 0 1.500Q0 .5 1 .5h7q1 0 1 1z" /></svg>
        </Scrollbar>
      </Viewport>

      <Taskbar>
        <Weather>
          <WeatherIcon />
          <div>
            <b>82°F</b>
            Mostly cloudy
          </div>
        </Weather>
        {apps.map((a, i) => (
          <Slot key={i}>
            <AppTile $active={a.active} $running={a.running}>{a.icon}</AppTile>
          </Slot>
        ))}
        <Tray>
          <Line size={12} box={12} w={1.2} color="#1b1b1b" d="M1.500 8 6 3.500 10.500 8" />
          <TrayIcons>
            <Line w={1.1} color="#1b1b1b" d="M9.500 6.300 6.800 1.200H5.300l1 5.100H3.200L1.800 4.200H.7L1.300 8l-.6 3.800h1.100l1.400-2.100h3.100l-1 5.100h1.500l2.700-5.100h4q1.800-.5 1.800-1.700t-1.800-1.700z" />
            <SpeakerIcon />
            <BatteryIcon />
          </TrayIcons>
          <Clock>
            21:00
            <br />
            17/12/2024
          </Clock>
          <BellIcon />
        </Tray>
      </Taskbar>

      <Watermark>
        <WatermarkTitle>Activate Windows</WatermarkTitle>
        <WatermarkText>Go to Settings to activate Windows.</WatermarkText>
      </Watermark>
    </Desktop>
  );
}
